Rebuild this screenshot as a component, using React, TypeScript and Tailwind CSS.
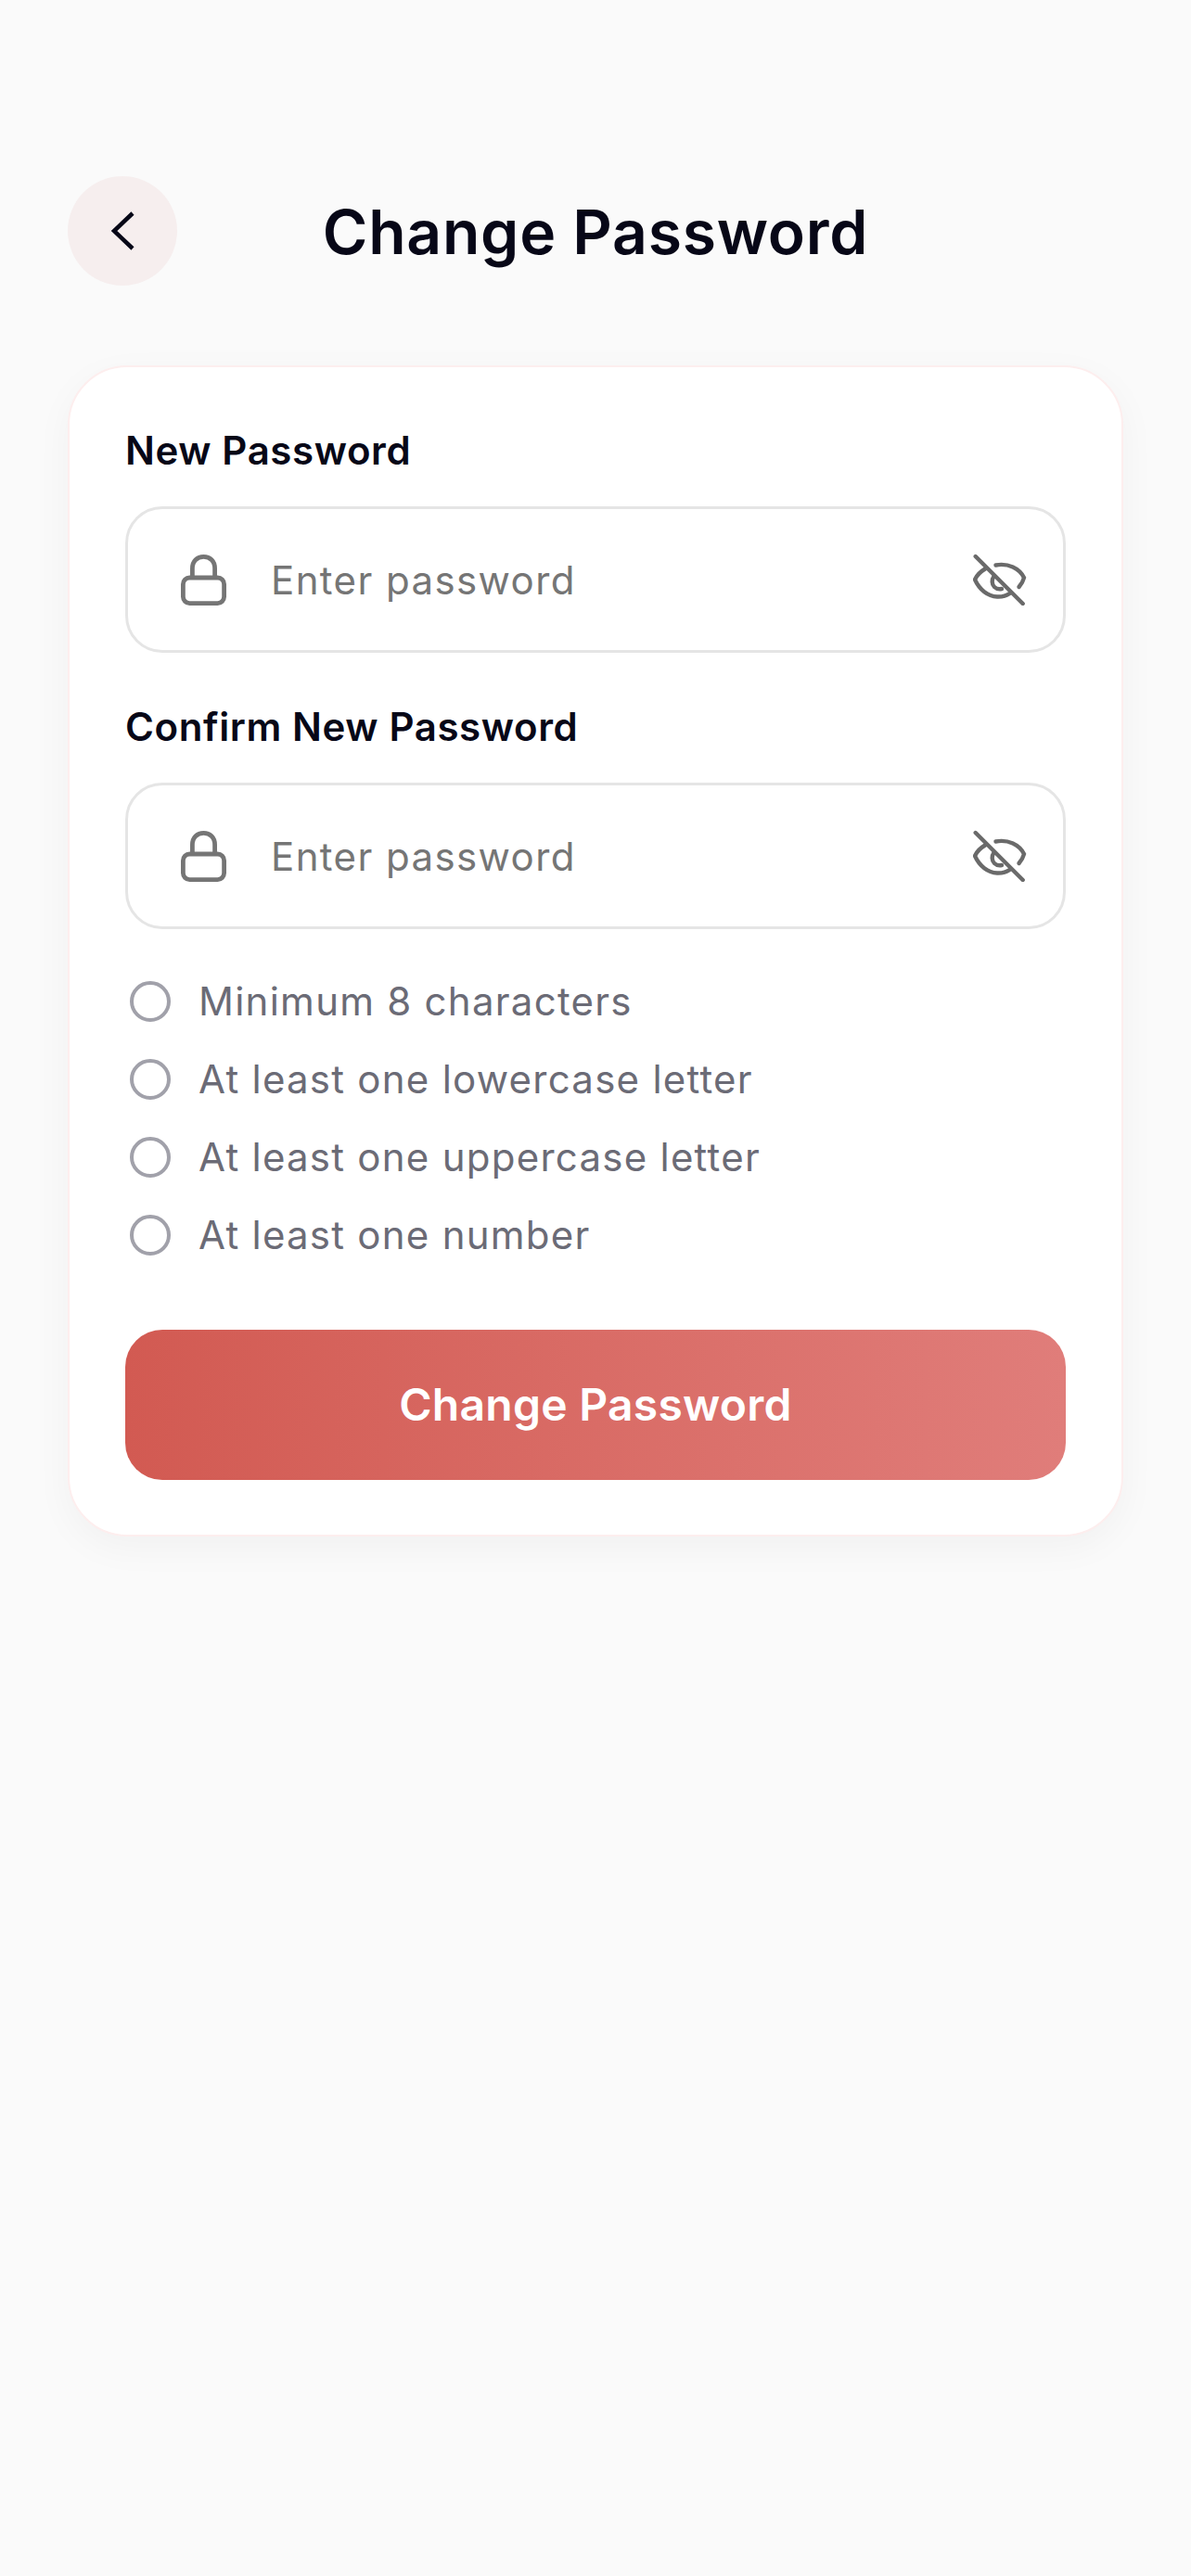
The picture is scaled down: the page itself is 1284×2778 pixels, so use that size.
const font = "font-['Inter',sans-serif]";

function BackIcon() {
  return (
    <svg width="30" height="44" viewBox="0 0 30 44" fill="none" stroke="#070717" strokeWidth="4.5">
      <path d="M26 3 L6 22 L26 41" />
    </svg>
  );
}

function LockIcon() {
  return (
    <svg width="49" height="55" viewBox="0 0 49 55" fill="none" stroke="#757575" strokeWidth="4.8" strokeLinejoin="round">
      <rect x="2.4" y="25" width="44.2" height="27.6" rx="7" />
      <path d="M12.4 25 V15 C12.4 7 17.5 2.4 24.5 2.4 C31.5 2.4 36.6 7 36.6 15 V25" />
    </svg>
  );
}

function EyeOffIcon() {
  return (
    <svg width="58" height="56" viewBox="0 -1 58 56" fill="none" stroke="#6a6a6a" strokeWidth="4.4" strokeLinecap="round">
      <path d="M24.5 11.5 C38 9 50 15 55 25 C54 29 52 32 49.5 35" />
      <path d="M13 15.5 C8 18.5 4 22.5 2 27 C7 38 16 45 26 45.5 C31 45.7 36 44.5 39.5 42" />
      <path d="M22.5 23.5 C20 27 20 32 23 35 C25 37 28 37.5 31 37" />
      <path d="M2.7 2 L53.7 53" />
    </svg>
  );
}

function PasswordField({ label }: { label: string }) {
  return (
    <div className="flex flex-col">
      <label className="text-[42px] leading-[48px] font-semibold tracking-[0.6px] text-[#070717]">{label}</label>
      <div className="mt-[36px] flex h-[158px] items-center rounded-[40px] border-[3px] border-[#e5e5e5] bg-white pl-[57px] pr-[39px]">
        <LockIcon />
        <span className="ml-[48px] flex-1 pt-[1px] text-[42px] tracking-[1.4px] text-[#757575]">Enter password</span>
        <EyeOffIcon />
      </div>
    </div>
  );
}

const rules = [
  "Minimum 8 characters",
  "At least one lowercase letter",
  "At least one uppercase letter",
  "At least one number",
];

export default function App() {
  return (
    <div className={`min-h-[2778px] bg-[#fafafa] px-[73px] pt-[190px] ${font}`}>
      <header className="relative flex h-[118px] items-center justify-center">
        <button className="absolute left-0 top-0 flex h-[118px] w-[118px] items-center justify-center rounded-full bg-[#f6eeee]">
          <BackIcon />
        </button>
        <h1 className="mt-[2px] text-[66px] font-semibold leading-none tracking-[0.75px] text-[#070717]">Change Password</h1>
      </header>

      <main className="mt-[86px] flex flex-col rounded-[64px] border-2 border-[#fdeeee] bg-white px-[60px] pb-[59px] pt-[66px] shadow-[0_12px_40px_rgba(0,0,0,0.04)]">
        <div className="flex flex-col gap-[56px]">
          <PasswordField label="New Password" />
          <PasswordField label="Confirm New Password" />
        </div>

        <ul className="mt-[54px] flex flex-col gap-[36px]">
          {rules.map((rule) => (
            <li key={rule} className="flex h-[48px] items-center">
              <span className="ml-[5px] h-[44px] w-[44px] rounded-full border-[4px] border-[#a1a1aa]" />
              <span className="ml-[30px] text-[42px] leading-[48px] tracking-[1.25px] text-[#6b6b76]">{rule}</span>
            </li>
          ))}
        </ul>

        <button className="mt-[78px] h-[162px] rounded-[40px] bg-gradient-to-r from-[#d25a52] to-[#e07d7a] text-[48px] font-semibold tracking-[0.25px] text-white">
          Change Password
        </button>
      </main>
    </div>
  );
}
